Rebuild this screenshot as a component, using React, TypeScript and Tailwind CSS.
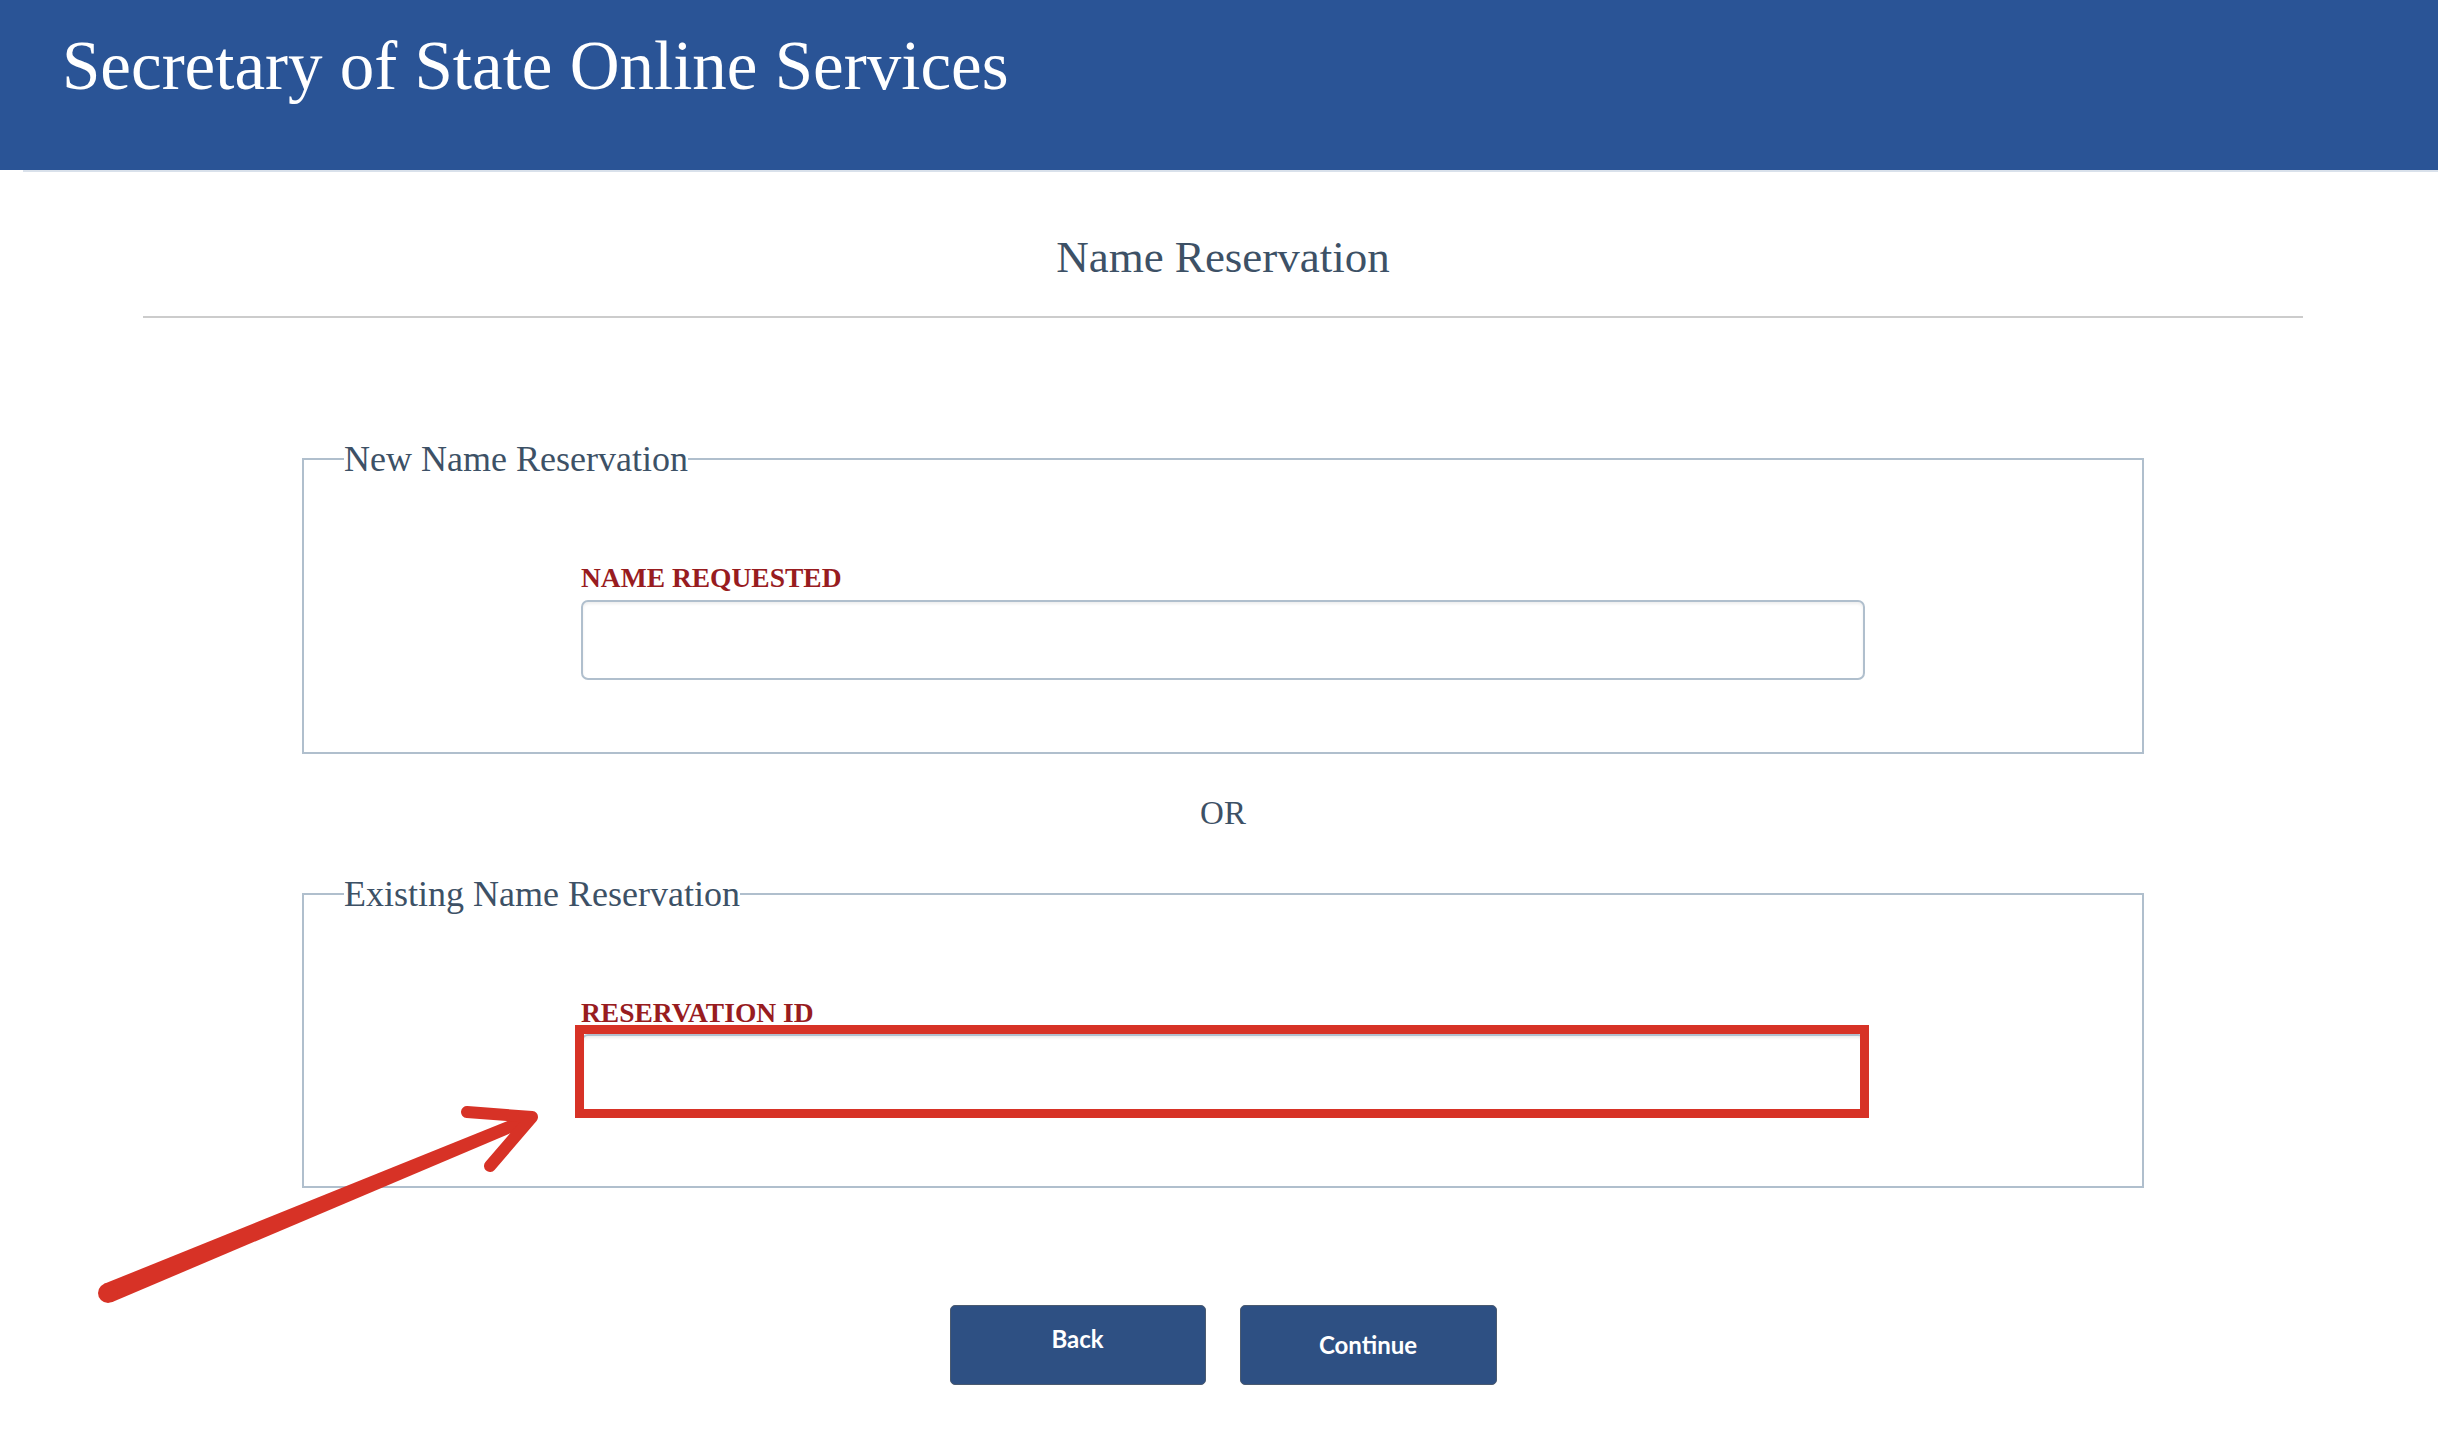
import React from "react";

const serif = "font-['Liberation_Serif','Times_New_Roman',serif]";

function Field({
  legend,
  label,
  highlighted,
}: {
  legend: string;
  label: string;
  highlighted?: boolean;
}) {
  return (
    <fieldset className="mx-[159px] border-2 border-[#b0bfcd] pl-[40px] pr-[40px] pt-[87px] pb-[72px]">
      <legend className={`${serif} p-0 text-[36px] leading-none text-[#3d5166]`}>
        {legend}
      </legend>
      <div className="mx-auto flex w-[1284px] flex-col gap-[8px]">
        <label className={`${serif} text-[27.5px] font-bold leading-none text-[#981c1f]`}>
          {label}
        </label>
        <div className="relative">
          <input
            type="text"
            className="block h-[80px] w-full rounded-[7px] border-2 border-[#b0bfcd] bg-white px-4 shadow-[inset_0_2px_3px_rgba(0,0,0,0.07)] outline-none"
          />
          {highlighted && (
            <div className="pointer-events-none absolute -left-[6px] -right-[4px] -top-[9px] -bottom-[4px] border-[9px] border-[#d73226]" />
          )}
        </div>
      </div>
    </fieldset>
  );
}

export default function App() {
  return (
    <div className="relative min-h-[1430px] w-full bg-white">
      <header className="h-[170px] bg-[#2a5496] pl-[62px] pt-[32px]">
        <h1 className={`${serif} text-[69px] font-normal leading-none text-white`}>
          Secretary of State Online Services
        </h1>
      </header>
      <div className="ml-[23px] h-[2px] bg-[#d9e1eb]" />

      <main className="ml-[143px] flex w-[2160px] flex-col">
        <h2
          className={`${serif} mt-[63px] text-center text-[45px] font-normal leading-none text-[#3d5166]`}
        >
          Name Reservation
        </h2>
        <div className="mt-[36px] h-[2px] bg-[#cccccc]" />

        <div className="mt-[123px]">
          <Field legend="New Name Reservation" label="NAME REQUESTED" />
        </div>

        <div
          className={`${serif} mt-[43px] text-center text-[33px] leading-none text-[#3d5166]`}
        >
          OR
        </div>

        <div className="mt-[46px]">
          <Field legend="Existing Name Reservation" label="RESERVATION ID" highlighted />
        </div>

        <div className="mt-[117px] flex justify-center gap-[34px]">
          <button className="flex h-[80px] w-[256px] items-center justify-center rounded-[5px] border border-[#4a5a70] bg-[#2e5083] pb-[12px] font-['Lato',sans-serif] text-[24px] font-bold text-white">
            Back
          </button>
          <button className="flex h-[80px] w-[257px] items-center justify-center rounded-[5px] border border-[#4a5a70] bg-[#2e5083] font-['Lato',sans-serif] text-[24px] font-bold text-white">
            Continue
          </button>
        </div>
      </main>

      {/* callout arrow pointing at the reservation id field */}
      <svg
        className="pointer-events-none absolute left-0 top-0"
        width="2438"
        height="1430"
        viewBox="0 0 2438 1430"
      >
        <polygon
          points="111.8,1302.2 104.2,1283.8 522.7,1114.9 527.3,1126.1"
          fill="#d73226"
        />
        <circle cx="108" cy="1293" r="10" fill="#d73226" />
        <polyline
          points="467,1112 532,1117 490,1166"
          fill="none"
          stroke="#d73226"
          strokeWidth="12"
          strokeLinecap="round"
          strokeLinejoin="round"
        />
      </svg>
    </div>
  );
}
